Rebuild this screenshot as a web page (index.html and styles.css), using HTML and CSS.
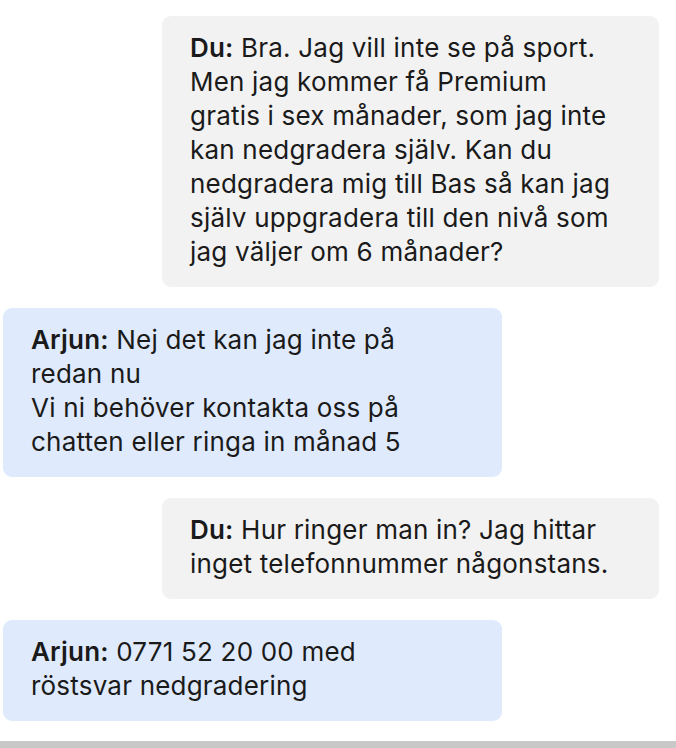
FILE: index.html
```html
<!DOCTYPE html>
<html lang="sv">
<head>
<meta charset="utf-8">
<link rel="stylesheet" href="styles.css">
</head>
<body>
<div class="chat">
  <div class="msg msg-user"><b>Du:</b> Bra. Jag vill inte se på sport.<br>Men jag kommer få Premium<br>gratis i sex månader, som jag inte<br>kan nedgradera själv. Kan du<br>nedgradera mig till Bas så kan jag<br>själv uppgradera till den nivå som<br>jag väljer om 6 månader?</div>
  <div class="msg msg-agent"><b>Arjun:</b> Nej det kan jag inte på<br>redan nu<br>Vi ni behöver kontakta oss på<br>chatten eller ringa in månad 5</div>
  <div class="msg msg-user"><b>Du:</b> Hur ringer man in? Jag hittar<br>inget telefonnummer någonstans.</div>
  <div class="msg msg-agent"><b>Arjun:</b> 0771 52 20 00 med<br>röstsvar nedgradering</div>
</div>
<div class="footer-line"></div>
</body>
</html>
```
FILE: styles.css
```css
html, body {
  margin: 0;
  padding: 0;
  background: #ffffff;
}
body {
  font-family: Inter, "Open Sans", sans-serif;
  color: #1a1a1a;
  width: 676px;
  height: 748px;
  overflow: hidden;
  display: flex;
  flex-direction: column;
}
.chat {
  display: flex;
  flex-direction: column;
  gap: 21px;
  padding: 16px 17px 0 3px;
  flex: 1;
}
.msg {
  box-sizing: border-box;
  width: 497px;
  padding: 15px 16px 18px 28px;
  border-radius: 9px;
  font-size: 26px;
  letter-spacing: 0.2px;
  line-height: 34px;
}
.msg b {
  font-weight: 600;
}
.msg-user {
  align-self: flex-end;
  background: #f2f2f2;
}
.msg-agent {
  align-self: flex-start;
  background: #dfeafc;
  width: 499px;
}
.footer-line {
  height: 7px;
  background: #c8c8c8;
}
```
